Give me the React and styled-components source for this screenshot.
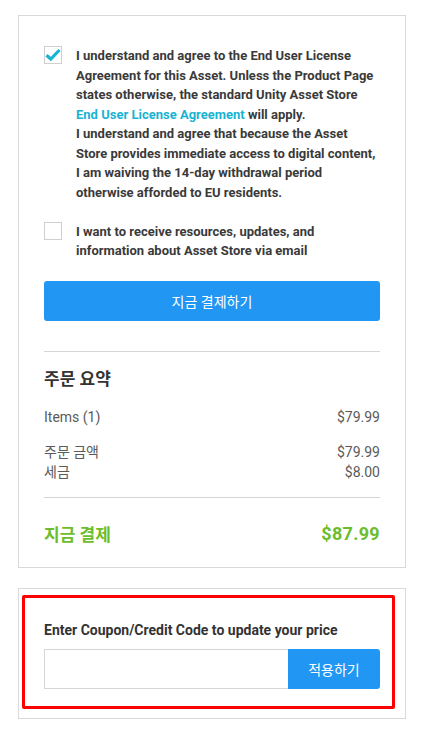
import React from 'react';
import styled, { createGlobalStyle } from 'styled-components';

const GlobalStyle = createGlobalStyle`
  body {
    margin: 0;
    background: #fff;
    font-family: Roboto, "Noto Sans CJK KR", sans-serif;
    color: #333;
  }
`;

const Page = styled.div`
  display: flex;
  flex-direction: column;
  gap: 20px;
  padding: 15px 0 20px 18px;
`;

const Card = styled.section`
  width: 388px;
  box-sizing: border-box;
  background: #fff;
  border: 1px solid #d9d9d9;
  padding: ${(p) => p.$pad};
`;

const CheckRow = styled.label`
  display: flex;
  align-items: flex-start;
  gap: 14px;
  margin-top: ${(p) => p.$top || 0}px;
`;

const Box = styled.span`
  flex: none;
  width: 18px;
  height: 18px;
  box-sizing: border-box;
  border: 1px solid #cfcfcf;
  background: #fff;
  display: flex;
  align-items: center;
  justify-content: center;
`;

const CheckText = styled.p`
  margin: 0;
  font-size: 13px;
  line-height: 19.5px;
  font-weight: 700;
  color: #3a3a3a;
`;

const Link = styled.a`
  color: #19b3d3;
  text-decoration: none;
`;

const PayButton = styled.button`
  display: block;
  width: 100%;
  height: 40px;
  margin-top: 20.5px;
  border: 0;
  border-radius: 3px;
  background: #2196f3;
  color: #fff;
  font: 400 14px Roboto, "Noto Sans CJK KR", sans-serif;
`;

const Divider = styled.hr`
  margin: ${(p) => p.$top}px 0 0;
  border: 0;
  border-top: 1px solid #d6d6d6;
`;

const Heading = styled.h3`
  margin: 15px 0 0;
  font-size: 17px;
  line-height: 24px;
  font-weight: 700;
  color: #333;
`;

const Line = styled.div`
  display: flex;
  justify-content: space-between;
  margin-top: ${(p) => p.$top || 0}px;
  font-size: 14px;
  line-height: 20px;
  color: #5a5a5a;
`;

const Total = styled.div`
  display: flex;
  justify-content: space-between;
  align-items: center;
  margin-top: 22px;
  height: 26px;
  color: #6cbd2b;
  font-weight: 700;
  font-size: 17px;
`;

const TotalPrice = styled.span`
  font-size: 18px;
  letter-spacing: 0.3px;
`;

const Highlight = styled.div`
  border: 3px solid #f00;
  border-radius: 2px;
  padding: 22px 12px 17px 19px;
`;

const CouponLabel = styled.p`
  margin: 0;
  font-size: 14px;
  line-height: 20px;
  font-weight: 700;
  color: #333;
`;

const CouponForm = styled.div`
  display: flex;
  margin-top: 9px;
  height: 40px;
`;

const CouponInput = styled.input`
  flex: 1;
  min-width: 0;
  box-sizing: border-box;
  border: 1px solid #d6d6d6;
  border-right: 0;
  outline: none;
`;

const ApplyButton = styled.button`
  flex: none;
  width: 92px;
  border: 0;
  border-radius: 0 3px 3px 0;
  background: #2196f3;
  color: #fff;
  font: 400 14px Roboto, "Noto Sans CJK KR", sans-serif;
`;

const Check = () => (
  <svg width="16" height="14" viewBox="0 0 16 14">
    <path d="M1.5 7.2 L5.8 11 L14.5 2" fill="none" stroke="#1ab3d3" strokeWidth="3.2" strokeLinejoin="miter" />
  </svg>
);

export default function App() {
  return (
    <>
      <GlobalStyle />
      <Page>
        <Card $pad="30px 25px 21px 25px">
          <CheckRow>
            <Box><Check /></Box>
            <CheckText>
              I understand and agree to the End User License Agreement for this Asset. Unless the Product Page
              states otherwise, the standard Unity Asset Store <Link href="#">End User License Agreement</Link> will apply.
              <br />
              I understand and agree that because the Asset Store provides immediate access to digital content,
              I am waiving the 14-day withdrawal period otherwise afforded to EU residents.
            </CheckText>
          </CheckRow>
          <CheckRow $top={19.5}>
            <Box />
            <CheckText>I want to receive resources, updates, and information about Asset Store via email</CheckText>
          </CheckRow>
          <PayButton>지금 결제하기</PayButton>
          <Divider $top={30} />
          <Heading>주문 요약</Heading>
          <Line $top={16}><span>Items (1)</span><span>$79.99</span></Line>
          <Line $top={15}><span>주문 금액</span><span>$79.99</span></Line>
          <Line><span>세금</span><span>$8.00</span></Line>
          <Divider $top={15} />
          <Total><span>지금 결제</span><TotalPrice>$87.99</TotalPrice></Total>
        </Card>
        <Card $pad="6px 10px 9px 3px">
          <Highlight>
            <CouponLabel>Enter Coupon/Credit Code to update your price</CouponLabel>
            <CouponForm>
              <CouponInput />
              <ApplyButton>적용하기</ApplyButton>
            </CouponForm>
          </Highlight>
        </Card>
      </Page>
    </>
  );
}
